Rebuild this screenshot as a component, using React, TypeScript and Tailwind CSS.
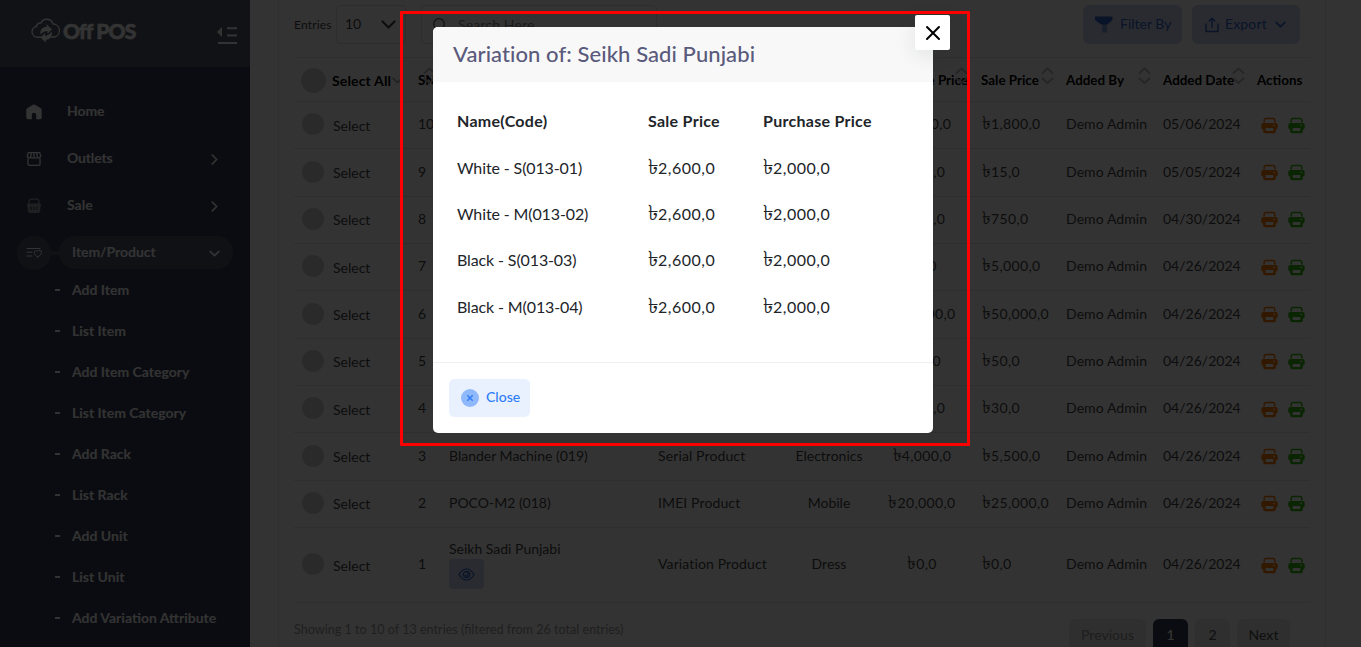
import React from "react";

type Row = {
  sn: number;
  name?: string;
  type?: string;
  category?: string;
  purchase: string;
  sale: string;
  date: string;
  variation?: boolean;
};

const rows: Row[] = [
  { sn: 10, purchase: "1,300,0", sale: "1,800,0", date: "05/06/2024" },
  { sn: 9, purchase: "110,0", sale: "15,0", date: "05/05/2024" },
  { sn: 8, purchase: "600,0", sale: "750,0", date: "04/30/2024" },
  { sn: 7, purchase: "0,0", sale: "5,000,0", date: "04/26/2024" },
  { sn: 6, purchase: "40,000,0", sale: "50,000,0", date: "04/26/2024" },
  { sn: 5, purchase: "40,0", sale: "50,0", date: "04/26/2024" },
  { sn: 4, purchase: "110,0", sale: "30,0", date: "04/26/2024" },
  { sn: 3, name: "Blander Machine (019)", type: "Serial Product", category: "Electronics", purchase: "4,000,0", sale: "5,500,0", date: "04/26/2024" },
  { sn: 2, name: "POCO-M2 (018)", type: "IMEI Product", category: "Mobile", purchase: "20,000,0", sale: "25,000,0", date: "04/26/2024" },
  { sn: 1, name: "Seikh Sadi Punjabi", type: "Variation Product", category: "Dress", purchase: "0,0", sale: "0,0", date: "04/26/2024", variation: true },
];

const subItems = [
  "Add Item", "List Item", "Add Item Category", "List Item Category", "Add Rack",
  "List Rack", "Add Unit", "List Unit", "Add Variation Attribute",
];

const variations = [
  "White - S(013-01)", "White - M(013-02)", "Black - S(013-03)", "Black - M(013-04)",
];

const GRID = "grid grid-cols-[124px_31px_208px_130px_84px_110px_85px_97px_94px_53px]";

function Chevron({ dir, size = 10, className = "" }: { dir: "right" | "down" | "up"; size?: number; className?: string }) {
  const d = dir === "right" ? "M3 1 L7 5 L3 9" : dir === "down" ? "M1 3 L5 7 L9 3" : "M1 7 L5 3 L9 7";
  return (
    <svg width={size} height={size} viewBox="0 0 10 10" fill="none" stroke="currentColor" strokeWidth="1.5" strokeLinecap="round" strokeLinejoin="round" className={className}>
      <path d={d} />
    </svg>
  );
}

function Sort({ className }: { className: string }) {
  return (
    <svg width="13" height="18" viewBox="0 0 13 18" fill="none" stroke="#b8b8b8" strokeWidth="1.7" className={"absolute top-[9px] " + className}>
      <path d="M1 6.5 L6.5 1.5 L12 6.5 M1 11 L6.5 16 L12 11" />
    </svg>
  );
}

function Printer({ className }: { className: string }) {
  return (
    <svg width="17" height="17" viewBox="0 0 17 17" className={className}>
      <path d="M3.2 5.6 V3.2 A1.8 1.8 0 0 1 5 1.4 H12 A1.8 1.8 0 0 1 13.8 3.2 V5.6" fill="none" stroke="currentColor" strokeWidth="1.5" />
      <path fillRule="evenodd" fill="currentColor" d="M2.3 6 H14.7 A2 2 0 0 1 16.7 8 V10.6 A2 2 0 0 1 14.9 12.6 V14.2 A2 2 0 0 1 12.9 16.2 H4.1 A2 2 0 0 1 2.1 14.2 V12.6 A2 2 0 0 1 0.3 10.6 V8 A2 2 0 0 1 2.3 6 Z M4.7 11 H12.3 V13.4 A0.7 0.7 0 0 1 11.6 14.1 H5.4 A0.7 0.7 0 0 1 4.7 13.4 Z M13.1 7.6 A0.8 0.8 0 1 0 13.1 9.2 A0.8 0.8 0 1 0 13.1 7.6 Z" />
    </svg>
  );
}

function Price({ value, className = "" }: { value: string; className?: string }) {
  return <span className={className}><span className="text-[1.32em] leading-none tracking-normal">৳</span>{value}</span>;
}

function Sidebar() {
  return (
    <aside className="flex h-full w-[250px] shrink-0 flex-col bg-[#393f56] font-bold text-white">
      <div className="flex h-[67px] shrink-0 items-start justify-between bg-[#555a6e] pl-[31px] pr-[12px]">
        <div className="flex pt-[18px]">
          <svg width="30" height="26" viewBox="0 0 30 26" fill="none">
            <path d="M10 19.2 H6.4 A5.4 5.4 0 0 1 5.4 8.5 A4.4 4.4 0 0 1 10 5 A6.4 6.4 0 0 1 22 6 A6.6 6.6 0 0 1 23.5 19 H20" stroke="currentColor" strokeWidth="1.4" />
            <path d="M9.5 16.5 C8.6 10.8 12.5 8.6 15.5 9 V6.3 L21 11.3 L16.5 15.8 V13 C13.5 13 11.8 14.5 9.5 16.5 Z" fill="currentColor" />
            <path d="M20.8 13.6 C21.6 19.4 18 22 14.8 21.7 V24.6 L9.4 19.6 L14 15.2 V17.8 C16.8 17.8 18.8 16 20.8 13.6 Z" fill="currentColor" />
          </svg>
          <span className="ml-[2px] mt-px text-[21px] font-black leading-[24px] tracking-[-0.85px] [-webkit-text-stroke:0.6px_white]">Off POS</span>
        </div>
        <svg width="22" height="20" viewBox="0 0 22 20" fill="currentColor" className="mt-[26px]">
          <path d="M6 1 V11 L1 6 Z" />
          <path d="M11 1.2 H21 V3.2 H11 Z M11 8.4 H21 V10.4 H11 Z M2 16 H21 V18 H2 Z" />
        </svg>
      </div>

      <nav className="flex flex-col pt-[21px] text-[14px]">
        <div className="flex h-[47px] items-center pl-[26px]">
          <svg width="16" height="16" viewBox="0 0 16 16" fill="currentColor">
            <path d="M7 .8 L1.2 4.2 Q0.3 4.8 0.3 5.8 V13.6 Q0.3 15.2 1.9 15.2 H5.8 V11 A2.2 2.2 0 0 1 10.2 11 V15.2 H14.1 Q15.7 15.2 15.7 13.6 V5.8 Q15.7 4.8 14.8 4.2 L9 .8 Q8 .2 7 .8 Z" />
          </svg>
          <span className="mb-[2px] ml-[25px] tracking-[-0.1px]">Home</span>
        </div>
        <div className="flex h-[47px] items-center pl-[26px]">
          <svg width="16" height="16" viewBox="0 0 16 16" fill="none" stroke="currentColor" strokeWidth="1.3">
            <path d="M2 7.5 V13 Q2 14.3 3.3 14.3 H12.7 Q14 14.3 14 13 V7.5 M2.3 1.6 H13.7 L14.8 5.2 A2.2 2 0 0 1 11.4 6.4 A2.2 2 0 0 1 8 6.4 A2.2 2 0 0 1 4.6 6.4 A2.2 2 0 0 1 1.2 5.2 Z M5.4 1.6 L4.6 6 M8 1.6 V6 M10.6 1.6 L11.4 6" />
          </svg>
          <span className="mb-[2px] ml-[25px] grow tracking-[-0.15px]">Outlets</span>
          <Chevron dir="right" size={11} className="mr-[30px] mt-px" />
        </div>
        <div className="flex h-[47px] items-center pl-[26px]">
          <svg width="16" height="16" viewBox="0 0 16 16" className="opacity-50">
            <path d="M3 6 V4 Q3 1.2 6 1.2 H10 Q13 1.2 13 4 V6" fill="none" stroke="currentColor" strokeWidth="1.2" />
            <path fillRule="evenodd" fill="currentColor" d="M2 5.4 H14 Q15.2 5.6 14.9 7 L13.9 13.4 Q13.6 15 12 15 H4 Q2.4 15 2.1 13.4 L1.1 7 Q0.8 5.6 2 5.4 Z M4.6 8.6 V12 H5.6 V8.6 Z M7.5 8.6 V12 H8.5 V8.6 Z M10.4 8.6 V12 H11.4 V8.6 Z" />
          </svg>
          <span className="mb-[2px] ml-[25px] grow">Sale</span>
          <Chevron dir="right" size={11} className="mr-[30px] mt-px" />
        </div>
        <div className="flex h-[47px] items-center pl-[17px]">
          <div className="flex size-[34px] items-center justify-center rounded-full bg-[#50556a]">
            <svg width="17" height="12" viewBox="0 0 17 12" fill="none" stroke="currentColor" strokeWidth="1" strokeLinecap="round">
              <path d="M1 1.5 H14 M1 5.2 H6 M1 9 H6" />
              <path d="M11.7 10 C9.6 8.6 8.3 7.3 8.3 5.6 A1.8 1.8 0 0 1 11.7 4.6 A1.8 1.8 0 0 1 15.4 5.6 C15.4 7.3 13.9 8.6 11.7 10 Z" />
            </svg>
          </div>
          <div className="h-[4px] w-[8px] bg-[#50556a]" />
          <div className="flex h-[33px] w-[174px] items-center justify-between rounded-full bg-[#50556a] pl-[13px] pr-[13px]">
            <span className="mb-[2px] tracking-[-0.05px]">Item/Product</span>
            <Chevron dir="down" size={11} className="mt-px" />
          </div>
        </div>
      </nav>

      <ul className="-mt-[7px] text-[14px]">
        {subItems.map((s) => (
          <li key={s} className="flex h-[41px] items-center pl-[55px]">
            <span className="mr-[12px] h-[2px] w-[5px] bg-white" />
            {s}
          </li>
        ))}
      </ul>
    </aside>
  );
}

function Toolbar() {
  return (
    <div className="flex h-[39px] shrink-0 items-center text-[14px]">
      <span className="w-[42px] text-[12px] tracking-[0.15px] text-[#444]">Entries</span>
      <div className="flex h-full w-[70px] items-center justify-between rounded border border-[#dedede] pl-[8px] pr-[9px] text-[#444]">
        <span className="mb-[2px]">10</span>
        <Chevron dir="down" size={15} />
      </div>
      <div className="ml-[15px] flex h-full w-[236px] items-center rounded border border-[#dedede] pl-[11px] text-[#8c8c8c]">
        <svg width="14" height="14" viewBox="0 0 14 14" fill="none" stroke="#555" strokeWidth="1.2">
          <circle cx="6" cy="6" r="5.3" />
          <path d="M10 10 L13.3 13.3" />
        </svg>
        <span className="ml-[11px] tracking-[0.15px]">Search Here</span>
      </div>
      <div className="ml-auto flex h-full w-[99px] items-center rounded-md bg-[#cfd6ee] pl-[12px] text-[#2f66cc]">
        <svg width="18" height="17" viewBox="0 0 18 17" fill="currentColor">
          <path d="M0 0.5 H17.5 V4 L12 8.5 H6 L0 4 Z" />
          <path d="M17.5 4 L12 9 V16.5 H7 V9 L6 8.5 L11 8 Z" opacity=".5" />
        </svg>
        <span className="mb-[2px] ml-[7px]">Filter By</span>
      </div>
      <div className="ml-[10px] mr-[10px] flex h-full w-[108px] items-center rounded-md bg-[#cfd6ee] pl-[13px] text-[#2f66cc]">
        <svg width="14" height="16" viewBox="0 0 14 16" fill="none" stroke="currentColor" strokeWidth="1.4" strokeLinecap="round" strokeLinejoin="round" className="mt-px">
          <path d="M1 7 V14.5 H13 V7 M7 10.5 V1.5 M4.2 4 L7 1.2 L9.8 4" />
        </svg>
        <span className="mb-[2px] ml-[6px] w-[43px] tracking-[0.15px]">Export</span>
        <Chevron dir="down" size={11} className="ml-[7px]" />
      </div>
    </div>
  );
}

function Table() {
  return (
    <div className="mt-[13px] shrink-0 border-t border-[#e4e4e4] text-[14px] text-[#444]">
      <div className={GRID + " h-[44px] items-center border-b border-[#e4e4e4] text-[13.4px] font-bold text-black"}>
        <div className="flex h-full items-center pl-[7px] pt-px">
          <span className="size-[25px] shrink-0 rounded-full bg-[#d2d2d2]" />
          <span className="ml-[6px] text-[14px] tracking-[0.15px]">Select All</span>
          <Chevron dir="down" size={11} className="ml-px shrink-0 text-[#a8a8a8]" />
        </div>
        <div className="relative flex h-full items-center pt-[2px]">SN<Sort className="left-[5px]" /></div>
        <div />
        <div />
        <div />
        <div className="relative flex h-full items-center justify-end whitespace-nowrap pr-[13px] pt-[2px]">Purchase Price<Sort className="right-[13px]" /></div>
        <div className="relative flex h-full items-center pt-[2px]">Sale Price<Sort className="right-[12px]" /></div>
        <div className="relative flex h-full items-center pt-[2px]">Added By<Sort className="right-[12px]" /></div>
        <div className="relative flex h-full items-center pt-[2px]">Added Date<Sort className="right-[12px]" /></div>
        <div className="pt-[2px]">Actions</div>
      </div>
      {rows.map((r) => (
        <div key={r.sn} className={GRID + " items-center border-b border-[#e4e4e4] pb-[2px] " + (r.variation ? "h-[75px]" : "h-[47.35px]")}>
          <div className="flex items-center pl-[8px]">
            <span className="size-[22px] rounded-full bg-[#d2d2d2]" />
            <span className="ml-[9px] pt-[2px]">Select</span>
          </div>
          <div className="pb-px">{r.sn}</div>
          <div className={r.variation ? "flex flex-col pb-px" : "pb-px"}>
            {r.name}
            {r.variation && (
              <span className="flex h-[30px] w-[35px] items-center justify-center rounded bg-[#cfd6ee] text-[#2f66cc]">
                <svg width="17" height="13" viewBox="0 0 17 13" fill="none" stroke="currentColor" strokeWidth="1.2">
                  <path d="M1 6.5 C3 3 5.6 1 8.5 1 C11.4 1 14 3 16 6.5 C14 10 11.4 12 8.5 12 C5.6 12 3 10 1 6.5 Z" />
                  <circle cx="8.5" cy="6.5" r="3.2" />
                  <path d="M8.5 4.8 A1.7 1.7 0 1 1 6.8 6.5" />
                </svg>
              </span>
            )}
          </div>
          <div className="pb-px pl-px tracking-[0.12px]">{r.type}</div>
          <div className="pb-px text-center">{r.category}</div>
          <div className="pb-px pr-[8px] text-center"><Price value={r.purchase} className="tracking-[0.38px]" /></div>
          <div className="pb-px pl-px"><Price value={r.sale} className="tracking-[0.38px]" /></div>
          <div className="pb-px tracking-[0.08px]">Demo Admin</div>
          <div className="pb-px">{r.date}</div>
          <div className="flex gap-[10px] pl-[4px] pt-[2px]">
            <Printer className="text-[#ff7a00]" />
            <Printer className="text-[#35b80c]" />
          </div>
        </div>
      ))}
    </div>
  );
}

function Footer() {
  return (
    <div className="flex h-[60px] shrink-0 pt-[16px]">
      <p className="pt-[2px] text-[12.6px] text-[#9c9c9c]">Showing 1 to 10 of 13 entries (filtered from 26 total entries)</p>
      <div className="ml-auto mr-[20px] flex h-[34px] gap-[7px] text-[14px] font-medium text-[#555]">
        <span className="flex w-[77px] items-center justify-center rounded-md bg-[#ececec] pb-[3px] text-[#999]">Previous</span>
        <span className="flex w-[35px] items-center justify-center rounded-md bg-[#393f56] pb-[3px] text-white">1</span>
        <span className="flex w-[35px] items-center justify-center rounded-md bg-[#ececec] pb-[3px]">2</span>
        <span className="flex w-[53px] items-center justify-center rounded-md bg-[#ececec] pb-[3px]">Next</span>
      </div>
    </div>
  );
}

function Modal() {
  return (
    <div className="absolute left-[433px] top-[27px] flex h-[406px] w-[500px] flex-col rounded-[5px] bg-white text-[#212529]">
      <div className="flex h-[55px] items-center rounded-t-[5px] bg-[#f8f8f8] pb-[2px] pl-[20px] text-[22px] font-medium tracking-[0.08px] text-[#5a5a7c]">
        Variation of: Seikh Sadi Punjabi
      </div>
      <button className="absolute -top-[12px] left-[482px] flex size-[35px] items-center justify-center rounded-[2px] bg-white text-black shadow-[0_5px_20px_rgba(34,41,47,0.1)]">
        <svg width="16" height="16" viewBox="0 0 16 16" stroke="currentColor" strokeWidth="2" strokeLinecap="round">
          <path d="M2 2 L14 14 M14 2 L2 14" />
        </svg>
      </button>
      <div className="flex grow flex-col pl-[24px] pt-[16px]">
        <div className="grid h-[47px] grid-cols-[191px_115px_1fr] items-center pb-[2px] text-[16px] font-bold tracking-[0.28px]">
          <span>Name(Code)</span>
          <span>Sale Price</span>
          <span>Purchase Price</span>
        </div>
        {variations.map((v) => (
          <div key={v} className="grid h-[46.2px] grid-cols-[191px_115px_1fr] items-center text-[16px]">
            <span className="tracking-[-0.12px]">{v}</span>
            <Price value="2,600,0" className="pb-px tracking-[0.5px]" />
            <Price value="2,000,0" className="pb-px tracking-[0.5px]" />
          </div>
        ))}
      </div>
      <div className="h-[71px] border-t border-[#efefef] pl-[16px] pt-[16px]">
        <button className="flex h-[38px] w-[81px] items-center rounded-[5px] bg-[#e9f1ff] pl-[12px] text-[14px] font-medium text-[#2f7df6]">
          <svg width="18" height="18" viewBox="0 0 18 18">
            <circle cx="9" cy="9" r="9" fill="#8fb9fb" />
            <path d="M6.3 6.3 L11.7 11.7 M11.7 6.3 L6.3 11.7" stroke="currentColor" strokeWidth="1.4" />
          </svg>
          <span className="mb-[3px] ml-[7px]">Close</span>
        </button>
      </div>
    </div>
  );
}

export default function App() {
  return (
    <div className="relative flex h-[647px] w-[1361px] overflow-hidden bg-[#fdfdfd] font-['Lato','Noto_Sans',sans-serif]">
      <Sidebar />
      <main className="ml-[28px] flex h-full w-[1048px] flex-col border-x border-[#eaeaea] bg-white px-[15px] pt-[5px]">
        <Toolbar />
        <Table />
        <Footer />
      </main>
      <div className="absolute inset-0 bg-black/80" />
      <Modal />
      <div className="pointer-events-none absolute left-[400px] top-[11px] h-[435px] w-[570px] rounded-[1px] border-[3px] border-[#ff0000]" />
    </div>
  );
}
